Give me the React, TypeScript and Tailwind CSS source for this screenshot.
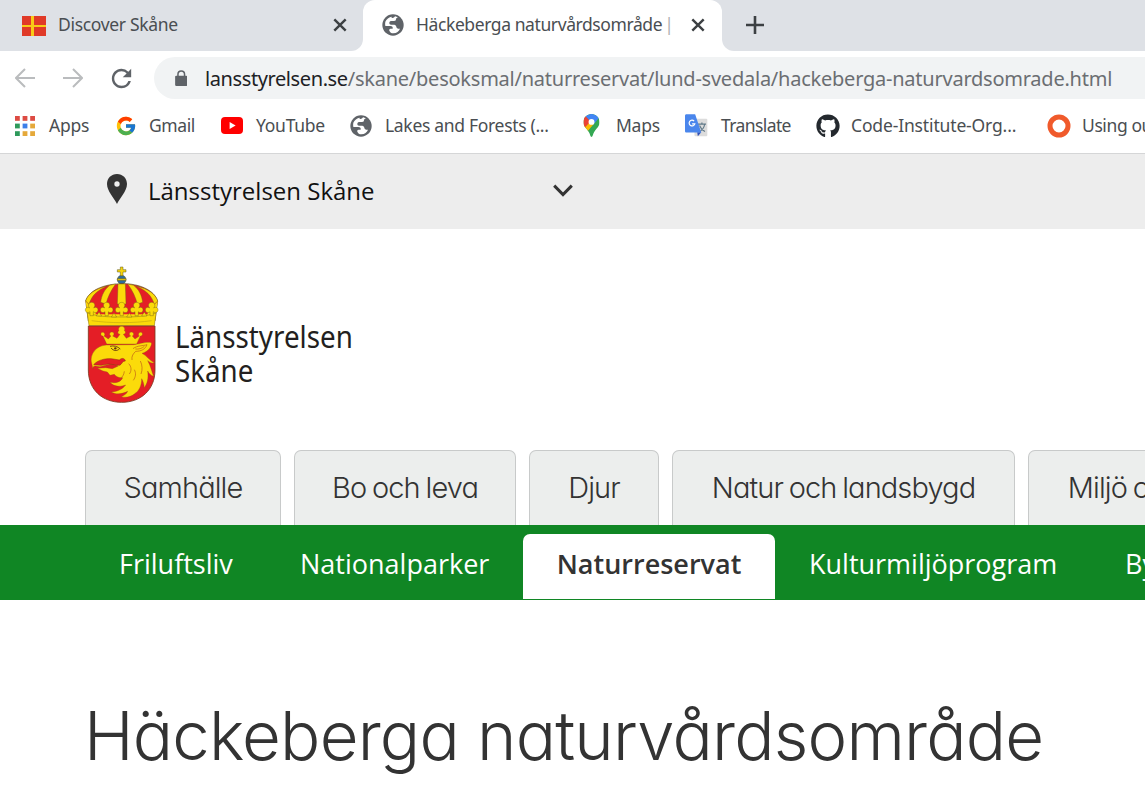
import type { ReactNode } from "react";
import { FcGoogle } from "react-icons/fc";
import { FaGithub } from "react-icons/fa";
import { MdRefresh } from "react-icons/md";

const ui = "font-['Noto_Sans',sans-serif] whitespace-nowrap";
const body = "font-['Open_Sans',sans-serif] whitespace-nowrap";
const display =
  "font-['Inter',sans-serif] font-light whitespace-nowrap [font-feature-settings:'cv11']";

function GlobeIcon() {
  return (
    <svg viewBox="0 0 66 66" className="size-[22px] shrink-0">
      <circle cx="33" cy="33" r="32" fill="#5f6368" />
      <path
        d="M30 8c-9 1-17 7-20 15-1 5-1 9 0 13h15c6 0 8 3 7 8h-6c-4 0-5 3-4 6 2 5 6 8 12 8 10-1 17-6 20-14-6 1-10-1-11-6-1-5-4-6-9-6h-7c-3 0-5-2-5-5 0-4 3-6 7-6h7c5 0 6-2 6-6 0-3 3-4 6-4-3-2-6-3-9-4-2 4-4 5-8 5-3 0-3-2-1-4z"
        fill="#fff"
      />
    </svg>
  );
}

function CloseIcon() {
  return (
    <svg viewBox="0 0 14 14" className="size-[14px] shrink-0" stroke="#3c4043" strokeWidth="2.4">
      <path d="M1.3 1.3 12.7 12.7M12.7 1.3 1.3 12.7" />
    </svg>
  );
}

function ArrowIcon({ forward = false }: { forward?: boolean }) {
  return (
    <svg viewBox="0 0 20 20" className="size-5 shrink-0" fill="none" stroke="#babcbe" strokeWidth="2">
      {forward ? <path d="M0 10h18.5M10 1l9 9-9 9" /> : <path d="M20 10H1.5M10 1l-9 9 9 9" />}
    </svg>
  );
}

function AppsIcon() {
  const colors = [
    "#dd4b43", "#dd4b43", "#dd4b43",
    "#2e9a5b", "#3d7fe8", "#e5a93a",
    "#2e9a5b", "#e5a93a", "#e5a93a",
  ];
  return (
    <svg viewBox="0 0 20 20" className="size-5 shrink-0">
      {colors.map((c, i) => (
        <rect key={i} x={(i % 3) * 7.6} y={Math.floor(i / 3) * 7.6} width="4.8" height="4.8" fill={c} />
      ))}
    </svg>
  );
}

function YouTubeIcon() {
  return (
    <svg viewBox="0 0 22 17" className="h-[17px] w-[22px] shrink-0">
      <rect width="22" height="17" rx="4" fill="#f00" />
      <path d="M8.6 4.9v7.2l6-3.6z" fill="#fff" />
    </svg>
  );
}

function MapsIcon() {
  return (
    <svg viewBox="0 0 51 70" className="h-[23px] w-[17px] shrink-0">
      <clipPath id="pin">
        <path d="M25.5 0C11 0 1 11 1 25c0 15 11 18 18 33 3 6 3 12 6.5 12s3.5-6 6.5-12c7-15 18-18 18-33C50 11 40 0 25.5 0z" />
      </clipPath>
      <g clipPath="url(#pin)">
        <path d="M0 0h51v70H0z" fill="#34a853" />
        <path d="M-2 40 18 20 33 30 9 58z" fill="#fbbc04" />
        <path d="M-4 4 8 5 25 20 3 44-4 30z" fill="#ea4335" />
        <path d="M7 6C20-4 40-2 48 12L31 33 17 17z" fill="#4285f4" />
      </g>
      <circle cx="25.5" cy="24" r="9" fill="#fff" />
    </svg>
  );
}

function TranslateIcon() {
  return (
    <svg viewBox="0 0 68 68" className="size-[23px] shrink-0">
      <rect x="28" y="14" width="38" height="52" rx="3" fill="#dcdcdc" />
      <path d="M38 30h24M50 25v5M58 31c-2 11-8 18-17 22M43 34c3 8 8 14 16 18" fill="none" stroke="#607988" strokeWidth="3.5" />
      <path d="M36 54h12L38 66z" fill="#3050b8" />
      <path d="M4 1h26l18 54H4c-2 0-4-2-4-4V5c0-2 2-4 4-4z" fill="#4a86ec" />
      <path d="M27 21a8.5 8.5 0 1 0 2 8h-8" fill="none" stroke="#fff" strokeWidth="3.5" />
    </svg>
  );
}

function SkaneFlag() {
  return (
    <svg viewBox="0 0 24 20" className="h-5 w-6 shrink-0">
      <path d="M0 0h24v20H0z" fill="#e03a28" />
      <path d="M9 0h3v20H9zM0 9h24v2H0z" fill="#f8cc16" />
    </svg>
  );
}

function Crest() {
  const trefoils = [50, 95, 140, 185, 230];
  return (
    <svg viewBox="0 0 285 465" className="h-[155px] w-[95px] shrink-0">
      <g stroke="#5b5420" strokeWidth="1.5">
        <circle cx="140" cy="74" r="13" fill="#2e6c9e" />
        <path d="M127 71h26v5h-26z" fill="#f6d50c" />
        <path d="M136 36h8v8h9v7h-9v11h-8V51h-9v-7h9z" fill="#f6d50c" />
      </g>
      <path d="M32 138C42 105 88 87 140 86s98 19 108 52l-8 60H40z" fill="#e41e26" stroke="#5b5420" strokeWidth="2" />
      <path d="M32 138 42 210h196l10-72-20 22H52z" fill="#fbdb0a" />
      <path d="M62 150h156v28H62z" fill="#e41e26" />
      <g fill="#fbdb0a" stroke="#6d5c18" strokeWidth="1.2">
        <path d="M129 87h22l2 60h-26z" />
        <path d="M122 87 104 91C88 104 80 120 77 142l16 5c5-20 14-40 29-60z" />
        <path d="M158 87l18 4c16 13 24 29 27 51l-16 5c-5-20-14-40-29-60z" />
        <path d="M97 93C60 101 38 118 32 138l10 10c8-26 24-42 55-55zM183 93c37 8 59 25 65 45l-10 10c-8-26-24-42-55-55z" />
        <path d="M37 174c30 10 55 12 103 12s73-2 103-12l-5 38H42z" />
        {trefoils.map((x) => (
          <path key={x} d={`M${x - 5} 182v-12c-4 5-14 3-14-5s8-10 13-6c-7-7-3-17 6-17s13 10 6 17c5-4 13-2 13 6s-10 10-14 5v12z`} />
        ))}
        <path d="M64 183l8-12 8 12zM109 186l8-12 8 12zM155 186l8-12 8 12zM200 183l8-12 8 12z" />
      </g>
      <path d="M50 197c55 8 125 8 180 0" fill="none" stroke="#c3a812" strokeWidth="2" />
      <path d="M40 213h200v132c0 60-43 97-100 97S40 405 40 345z" fill="#e41e26" stroke="#7b3a20" strokeWidth="2.5" />
      <g fill="#fbdb0a" stroke="#8a4f14" strokeWidth="1">
        <path d="M95 267 84 243c-7 1-9-9-2-11 7-1 10 8 5 11l13 9 8-9c-7-3-4-13 3-12 7 0 8 9 2 12l13 7 9-12c-8-2-8-9-3-11-4-7 2-13 8-13s12 6 8 13c5 2 5 9-3 11l9 12 13-7c-6-3-5-12 2-12s10 9 3 12l8 9 13-9c-5-3-2-12 5-11 7 2 5 12-2 11l-11 24z" />
        <path d="M50 325C43 296 65 272 94 270l81-1c19-1 29-8 50-7 5 0 6 5 3 10-6 15-18 20-27 23 14 7 22 21 37 29-9 1-14-3-20-7 9 15 12 33 18 47-9-3-14-9-18-16 3 24-1 36-10 50-1-12-4-20-8-27 0 21-8 37-22 46-10 8-26 12-39 8 10-4 16-9 19-16-18 9-37 10-49 2 22-2 35-10 43-21-22 8-39 2-47-8 20 4 34-3 38-14-10 2-20-3-25-10l-13 3-8-10-13-3-17-8 25-2 20 3 18-8c-7-5-17-6-27-5l-28 7-13-2c-8-1-9 6-8 10z" />
      </g>
      <path d="M56 329c12-14 34-19 53-18l24 4c8-8 17-5 18 3-9-1-10 10-17 13l-33-4-23 4z" fill="#e41e26" stroke="#8a2412" strokeWidth="1.5" />
      <path d="M105 274c11-3 23 0 31 8M108 279c8 9 17 10 25 3" fill="none" stroke="#5d3013" strokeWidth="2.5" />
      <circle cx="121" cy="280" r="3.5" fill="#5d3013" />
      <path d="M174 281c13-10 30-8 42-12-5 14-18 20-34 20-7 7-13 14-11 26M181 282c10 1 19-1 27-8M161 326c9 9 9 22 2 31M196 318c6 12 7 26 2 39M178 344c6 11 4 22-3 32M148 349c-1 10-6 18-14 23" fill="none" stroke="#bd5b18" strokeWidth="2" />
    </svg>
  );
}

function Bookmark({ icon, label, cls }: { icon: ReactNode; label: string; cls: string }) {
  return (
    <a className={`flex shrink-0 items-center ${cls}`}>
      {icon}
      <span>{label}</span>
    </a>
  );
}

function MainTab({ label, cls }: { label: string; cls: string }) {
  return (
    <a className={`flex h-[75px] shrink-0 items-center justify-center rounded-t-[7px] border border-b-0 border-[#c8caca] bg-[#eceeed] ${cls}`}>
      <span className={`${display} text-[29px] tracking-[-0.9px] [word-spacing:-1.5px] text-[#333]`}>{label}</span>
    </a>
  );
}

export default function App() {
  return (
    <div className="h-[789px] w-[1145px] overflow-hidden bg-white">
      <header className={`flex h-[51px] bg-[linear-gradient(#dee1e6_50%,#fff_50%)] text-[17.5px] text-[#4a4e52] ${ui}`}>
        <div className="flex w-[363px] shrink-0 items-center rounded-br-[12px] bg-[#dee1e6] pl-[22px]">
          <SkaneFlag />
          <span className="ml-3 flex-none pb-0.5 tracking-[-0.32px]">Discover Skåne</span>
          <span className="mr-[16px] ml-auto flex pb-px"><CloseIcon /></span>
        </div>
        <div className="flex w-[359px] shrink-0 items-center rounded-t-[12px] bg-white pl-[19px]">
          <span className="flex pb-px"><GlobeIcon /></span>
          <span className="ml-3 flex-none pb-0.5 tracking-[-0.41px]">Häckeberga naturvårdsområde</span>
          <span className="ml-[2px] pb-0.5 text-[#b0b0b0]">|</span>
          <span className="mr-[17px] ml-auto flex pb-px"><CloseIcon /></span>
        </div>
        <div className="flex flex-1 items-center rounded-bl-[12px] bg-[#dee1e6] pb-px pl-[24px]">
          <svg viewBox="0 0 18 18" className="size-[18px]" stroke="#3c4043" strokeWidth="2.6">
            <path d="M9 0v18M0 9h18" />
          </svg>
        </div>
      </header>

      <div className={`flex h-[54px] items-center pl-[15px] ${ui}`}>
        <ArrowIcon />
        <span className="ml-[28px] flex"><ArrowIcon forward /></span>
        <MdRefresh className="ml-[24px] size-[29px] shrink-0 text-[#5f6368]" />
        <div className="ml-[18px] flex h-[42px] flex-1 items-center rounded-l-full bg-[#f1f3f4] pl-[17px]">
          <svg viewBox="0 0 13 17" className="mr-[4px] ml-[3.5px] h-[16px] w-[12.5px] shrink-0">
            <path d="M3 7V4.5a3.5 3.5 0 0 1 7 0V7" fill="none" stroke="#5f6368" strokeWidth="1.6" />
            <rect y="6" width="13" height="11" rx="1.3" fill="#5f6368" />
          </svg>
          <span className="ml-[14px] pt-px text-[20px] tracking-[-0.235px] text-[#6b6e72]">
            <span className="tracking-[-0.4px] text-[#202124]">lansstyrelsen.se</span>/skane/besoksmal/naturreservat/lund-svedala/hackeberga-naturvardsomrade.html
          </span>
        </div>
      </div>

      <nav className={`flex h-[49px] items-center border-b border-[#d5d6d7] pb-[7px] pl-[15px] text-[17.5px] tracking-[-0.25px] text-[#4a4e52] ${ui}`}>
        <Bookmark icon={<AppsIcon />} label="Apps" cls="w-[100px] gap-[14px]" />
        <Bookmark icon={<FcGoogle className="size-[22px] shrink-0" />} label="Gmail" cls="w-[106px] gap-[12px] tracking-[-0.4px]" />
        <Bookmark icon={<YouTubeIcon />} label="YouTube" cls="w-[129px] gap-[13px]" />
        <Bookmark icon={<GlobeIcon />} label="Lakes and Forests (..." cls="w-[233px] gap-[13px] tracking-[-0.31px]" />
        <Bookmark icon={<MapsIcon />} label="Maps" cls="w-[102px] gap-[16px]" />
        <Bookmark icon={<TranslateIcon />} label="Translate" cls="w-[131px] gap-[13px] tracking-[-0.6px]" />
        <Bookmark icon={<FaGithub className="size-6 shrink-0 text-[#24292e]" />} label="Code-Institute-Org..." cls="w-[231px] gap-[11px] tracking-[-0.15px]" />
        <Bookmark
          icon={
            <svg viewBox="0 0 24 24" className="size-6 shrink-0">
              <circle cx="12" cy="12" r="9" fill="none" stroke="#f05a2b" strokeWidth="5" />
            </svg>
          }
          label="Using our"
          cls="w-[200px] gap-[11px] tracking-[-0.4px]"
        />
      </nav>

      <div className={`flex h-[75px] items-center bg-[#ededed] pl-[107px] ${body}`}>
        <svg viewBox="0 0 60 90" className="mb-[6px] h-[30px] w-5 shrink-0">
          <path fillRule="evenodd" d="M30 0C13 0 0 13 0 30c0 21 22 43 30 60 8-17 30-39 30-60C60 13 47 0 30 0zm0 22a8 8 0 1 1 0 16 8 8 0 0 1 0-16z" fill="#333" />
        </svg>
        <span className="ml-[21px] w-[405px] pb-[2px] text-[24px] text-[#111]">Länsstyrelsen Skåne</span>
        <svg viewBox="0 0 20 14" className="mb-[2px] h-[14px] w-5 shrink-0" fill="none" stroke="#333" strokeWidth="3">
          <path d="M1.2 1.6 10 10.5l8.8-8.9" />
        </svg>
      </div>

      <div className="flex h-[221px] pt-[26px] pl-[75px]">
        <Crest />
        <div className="mt-[65px] ml-[5px] flex origin-left scale-x-[0.925] flex-col font-['Noto_Sans',sans-serif] text-[30px] leading-[34px] text-[#231f20]">
          <span className="whitespace-nowrap">Länsstyrelsen</span>
          <span className="whitespace-nowrap">Skåne</span>
        </div>
      </div>

      <nav className="flex h-[75px] gap-[13px] pl-[85px]">
        <MainTab label="Samhälle" cls="w-[196px]" />
        <MainTab label="Bo och leva" cls="w-[222px]" />
        <MainTab label="Djur" cls="w-[130px]" />
        <MainTab label="Natur och landsbygd" cls="w-[343px]" />
        <MainTab label="Miljö och vatten" cls="w-[276px]" />
      </nav>

      <nav className={`flex h-[75px] bg-[#108624] pt-[9px] text-[27px] text-white ${body}`}>
        <a className="flex h-[60px] w-[261px] shrink-0 items-center pl-[119px]">Friluftsliv</a>
        <a className="flex h-[60px] w-[262px] shrink-0 items-center pl-[39px]">Nationalparker</a>
        <a className="flex h-[65px] w-[252px] shrink-0 items-center justify-center rounded-t-[7px] bg-white pb-[5px] font-semibold text-[#333]">Naturreservat</a>
        <a className="flex h-[60px] w-[350px] shrink-0 items-center pl-[34px]">Kulturmiljöprogram</a>
        <a className="flex h-[60px] shrink-0 items-center">Bygga</a>
      </nav>

      <h1 className={`mt-[95px] pl-[84px] text-[67px] leading-[82px] tracking-[-0.8px] text-[#333] ${display}`}>Häckeberga naturvårdsområde</h1>
    </div>
  );
}
